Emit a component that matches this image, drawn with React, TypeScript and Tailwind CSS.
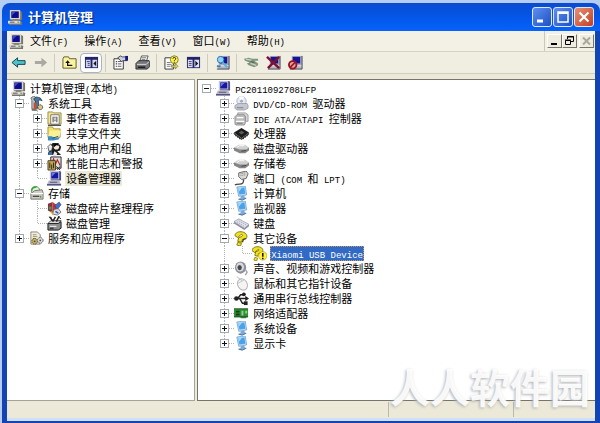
import { Fragment, ReactNode } from "react";
import clsx from "clsx";

type Node = {
    label: string;
    icon: ReactNode;
    open?: boolean;
    closed?: boolean;
    current?: boolean;
    selected?: boolean;
    children?: Node[];
};

function Icon({ children }: { children: ReactNode }) {
    return (
        <svg viewBox="0 0 16 16" className="w-[15px] h-[15px] shrink-0" aria-hidden="true">
            {children}
        </svg>
    );
}

/* ---------- icons ---------- */

const computer = (
    <Icon>
        <path d="M3 1h10l2 1v9H3z" fill="#77746e" />
        <path d="M2 0h11v10H2z" fill="#d8d5cc" />
        <path d="M3.5 1.5h8v7h-8z" fill="#0c0c8c" />
        <path d="M4 2h4L4 6z" fill="#3a4cc8" />
        <path d="M5 10h6v2H5z" fill="#77746e" />
        <path d="M1 12h13l1 1v3H1z" fill="#77746e" />
        <path d="M0 11.5h13v3H0z" fill="#dedbd2" />
        <path d="M2 13h5" stroke="#555" />
        <path d="M10 13h2" stroke="#2a9a2a" />
    </Icon>
);

const device = (
    <Icon>
        <path d="M4 0h10l1 1v9H4z" fill="#4f4f88" />
        <path d="M3 0h10v9H3z" fill="#c4c4dc" />
        <path d="M4.5 1.5h7.5v6.5H4.5z" fill="#1717a0" />
        <path d="M5 2h4L5 6z" fill="#6b7be0" />
        <path d="M2 10h11l2 4H0z" fill="#b7b7c6" />
        <path d="M0 14h15v1.5H0z" fill="#3d3d70" />
        <path d="M3 12h8" stroke="#50507a" />
    </Icon>
);

const monitor = (
    <Icon>
        <path d="M3 1l9-1 1.5 9.5L5 11z" fill="#b9dcf5" stroke="#6d9fce" strokeWidth=".8" />
        <path d="M4.5 2.3l6.6-.8 1 6.7-6.4.9z" fill="#4aa3ea" />
        <path d="M4.6 2.4l4-.5-3.3 4z" fill="#a6daff" />
        <path d="M7 11l4-1 .5 2 2 1-5 2.5L4 14l3-1.2z" fill="#7fa9d4" />
        <path d="M5 14l4 1 4-2" stroke="#4c73a6" fill="none" />
    </Icon>
);

const tools = (
    <Icon>
        <path d="M2 2l3-2 3 2-1 2v10H3V5z" fill="#b7bdc4" stroke="#444" strokeWidth=".7" />
        <path d="M5 3l3-2 4 1 2 3-3-1-1 2 1 7H7V6z" fill="#3f79a8" stroke="#222" strokeWidth=".7" />
        <path d="M5 7h3v7H5z" fill="#c7502a" />
        <circle cx="12" cy="12" r="2.6" fill="#d7c68a" stroke="#333" strokeDasharray="1.5 .8" />
        <path d="M3 15h6" stroke="#222" />
    </Icon>
);

const eventLog = (
    <Icon>
        <path d="M1 3V1h5l1 1h8v12H1z" fill="#f5e58c" stroke="#7b7434" strokeWidth=".8" />
        <path d="M4 4h9v10H4z" fill="#fff" stroke="#555" strokeWidth=".8" />
        <path d="M6.5 6v6M10.5 6v6" stroke="#333" />
        <path d="M8.5 6v5" stroke="#333" strokeDasharray="2 1" />
        <path d="M1 15.3h14" stroke="#222" />
    </Icon>
);

const sharedFolder = (
    <Icon>
        <path d="M1 3V1h5l1 2h7v9H1z" fill="#f6e36c" stroke="#8b8230" strokeWidth=".8" />
        <path d="M3 5h12l-2 7H1z" fill="#fbf09a" />
        <path d="M1 11h4l4 2 4-1v2l-6 1.5H1z" fill="#3f8cc0" />
        <path d="M6 13l6-2" stroke="#23506d" />
    </Icon>
);

const users = (
    <Icon>
        <path d="M1 15c0-4 2-5 4-5l-2-4 3-4h6l3 4-1 4-3 1 4 4z" fill="#1b1b1b" />
        <circle cx="10" cy="6" r="3" fill="#f3e7da" />
        <path d="M7 4c2-2 5-2 6 1l-3-.5L7 7z" fill="#000" />
        <path d="M1 6l3-3 2 3-1 4-3 1z" fill="#e9e9e9" stroke="#222" strokeWidth=".7" />
        <path d="M8 11l3 2-1 3H6z" fill="#e8e8e8" />
        <path d="M2 12l3-1 1 4H1z" fill="#386fb0" />
    </Icon>
);

const perfLog = (
    <Icon>
        <path d="M4 1h11v12H4z" fill="#ddd" stroke="#222" />
        <path d="M5 8l2-5 2 6 2-5 3 6" fill="none" stroke="#b32222" strokeWidth="1.2" />
        <path d="M1 5h8v10H1z" fill="#caa64a" stroke="#222" strokeWidth=".8" />
        <path d="M3 7v6M5 9v5M7 7v6" stroke="#222" />
        <path d="M10 11l4 4M14 11l-3 4" stroke="#222" />
    </Icon>
);

const storage = (
    <Icon>
        <circle cx="7" cy="5" r="4.5" fill="#dff0de" stroke="#57a057" />
        <path d="M3 5c0-3 3-4 5-4" stroke="#3aa23a" strokeWidth="1.5" fill="none" />
        <path d="M6 5l8-1 1 3v7H2V8z" fill="#d0cec6" stroke="#5c5a55" strokeWidth=".8" />
        <path d="M2 8h13" stroke="#fff" />
        <path d="M4 11h7" stroke="#444" strokeWidth="1.4" />
        <path d="M12.500 10.500v2" stroke="#2f9b2f" strokeWidth="1.2" />
    </Icon>
);

const defrag = (
    <Icon>
        <path d="M1 3l5-2v12l-5-3z" fill="#8c3040" />
        <path d="M6 1l4 3v10l-4-1z" fill="#c33" />
        <path d="M2 6h3v3H2z" fill="#35a050" />
        <path d="M8 5l5-4 2 3-4 5z" fill="#3b72cc" stroke="#223" strokeWidth=".5" />
        <path d="M7 9l5-1 3 4-4 3-5-1z" fill="#d9d9e4" stroke="#444" strokeWidth=".7" />
        <path d="M9 11l3 2" stroke="#2f55b8" strokeWidth="1.5" />
        <path d="M4 11l3 4" stroke="#e0b033" strokeWidth="1.5" />
    </Icon>
);

const diskManage = (
    <Icon>
        <path d="M1 8h11l3-2v7l-3 2H1z" fill="#8f8f8f" stroke="#111" />
        <path d="M1 8l3-3h11l-3 3z" fill="#ddd" stroke="#111" strokeWidth=".8" />
        <path d="M3 1l3 4M9 1L6 6M13 0l-3 6" stroke="#222" strokeWidth="1.6" />
        <path d="M2 1l3 1M12 1l3 2" stroke="#222" />
        <path d="M3 11h7" stroke="#fff" />
        <path d="M3 13h4" stroke="#111" />
    </Icon>
);

const services = (
    <Icon>
        <path d="M2 1h7l3 3v10H2z" fill="#f3eed9" stroke="#6a675c" strokeWidth=".8" />
        <path d="M4 4h4M4 6h5M4 8h3" stroke="#998f6c" />
        <circle cx="6" cy="11" r="3" fill="#c9b469" stroke="#4d4726" strokeDasharray="1.600 .8" />
        <circle cx="12" cy="10" r="3" fill="#dedede" stroke="#555" strokeDasharray="1.600 .8" />
        <circle cx="12" cy="10" r="1" fill="#555" />
        <circle cx="6" cy="11" r="1" fill="#4d4726" />
    </Icon>
);

const disc = (
    <Icon>
        <circle cx="8" cy="5.500" r="5" fill="#e6eaf2" stroke="#a3a9b8" strokeWidth=".8" />
        <path d="M8 5.500L5 1.500a5 5 0 016 0z" fill="#fff" />
        <circle cx="8" cy="5.500" r="1.500" fill="#9aa6c4" />
        <path d="M1 10l4-2h9l1 2v3l-4 2H3l-2-2z" fill="#c6c8cf" stroke="#888c98" strokeWidth=".7" />
        <path d="M3 12.500h7" stroke="#777c89" />
    </Icon>
);

const ide = (
    <Icon>
        <path d="M4 2h8l3 2v7h-3V6H4z" fill="#d6d6d6" stroke="#8a8a8a" strokeWidth=".8" />
        <path d="M1 6l2-2h8l1 2v7l-1 2H2l-1-1z" fill="#bdbdbd" stroke="#808080" strokeWidth=".8" />
        <path d="M3 7h7M2 11h9" stroke="#fff" strokeWidth="1.300" />
        <path d="M3 13h6" stroke="#777" />
    </Icon>
);

const cpu = (
    <Icon>
        <path d="M0 7l8-5 8 5-8 6z" fill="#1c1c1c" />
        <path d="M0 7v2l8 6 8-6V7l-8 6z" fill="#454545" />
        <path d="M2 9v2M4 10.500v2M6 12v2M10 12v2M12 10.500v2M14 9v2" stroke="#222" />
        <path d="M5 7l3-2 3 2-3 2z" fill="#5b5b5b" />
    </Icon>
);

const drive = (
    <Icon>
        <path d="M0 7l5-3h7l4 3-4 4H6z" fill="#d0d0d0" />
        <path d="M0 7l6 2h7l3-2v3l-4 3H6L0 10z" fill="#858585" />
        <path d="M8 11l5-1" stroke="#444" />
        <path d="M3 7l3-2h5" stroke="#fff" fill="none" />
    </Icon>
);

const port = (
    <Icon>
        <path d="M5 2l8-2 2 3-2 5-5 1-3-3z" fill="#d8d8d4" stroke="#555" strokeWidth=".9" />
        <path d="M7 3l5-1M7 5l5-1" stroke="#777" strokeDasharray="1 1" />
        <path d="M10 9c1 3-1 5-4 5s-4 0-5 1" fill="none" stroke="#444" strokeWidth="1.500" />
    </Icon>
);

const keyboard = (
    <Icon>
        <path d="M0 6l5-3 11 6-5 4z" fill="#dfe1ea" stroke="#9a9cab" strokeWidth=".8" />
        <path d="M0 6l11 7 5-4v2l-5 4L0 8z" fill="#8e90a2" />
        <path d="M3 6l8 5M5 5l8 4.500" stroke="#a8aaba" strokeDasharray="1.500 1" />
    </Icon>
);

const unknown = (
    <Icon>
        <path d="M1 5c0-3 4-5 8-4s6 4 4 7l-4 1-1 3-4-1 1-4 3-1c2-1 1-3-1-2L4 7z" fill="#f2e21c" stroke="#6e660a" strokeWidth=".9" />
        <path d="M4 12l4 1-1 3-4-1z" fill="#f2e21c" stroke="#6e660a" strokeWidth=".8" />
        <path d="M13 8l-3 1-1 3" fill="none" stroke="#3e3a08" strokeWidth="1.300" />
    </Icon>
);

const unknownAlert = (
    <Icon>
        <path d="M0 5c0-3 4-5 8-4s4 4 3 6l-4 1-1 3-3-1 1-4 3-1c1-1 0-2-1-1L3 7z" fill="#f2e21c" stroke="#6e660a" strokeWidth=".9" />
        <path d="M3 12l3 1-1 3-3-1z" fill="#f2e21c" stroke="#6e660a" strokeWidth=".7" />
        <circle cx="11.500" cy="10.500" r="4.500" fill="#fff23a" stroke="#a89b13" strokeWidth=".7" />
        <path d="M11.500 7.500v4M11.500 12.500v1.500" stroke="#000" strokeWidth="1.500" />
    </Icon>
);

const sound = (
    <Icon>
        <ellipse cx="7" cy="7" rx="6" ry="6.500" fill="#8d9097" />
        <ellipse cx="6.500" cy="6.500" rx="4.200" ry="4.800" fill="#d7d9de" />
        <ellipse cx="6" cy="7" rx="2.300" ry="2.800" fill="#43464d" />
        <path d="M12 9l2 3-2 3" fill="none" stroke="#a4a7b0" strokeWidth="1.500" />
    </Icon>
);

const mouse = (
    <Icon>
        <path d="M3 1c2 0 2 2 4 3" fill="none" stroke="#b5b5b5" />
        <ellipse cx="9" cy="9" rx="5" ry="6.300" transform="rotate(-30 9 9)" fill="#f4f4f4" stroke="#b0b0b0" />
        <path d="M4 8l7-4M7 3l1.500 3" stroke="#c4c4c4" fill="none" />
    </Icon>
);

const usb = (
    <Icon>
        <path d="M2 8h11" stroke="#222" strokeWidth="1.600" />
        <path d="M12 5l4 3-4 3z" fill="#222" />
        <circle cx="2.500" cy="8" r="2.400" fill="#222" />
        <path d="M4 8l3-4h3M6 8l3 5h3" fill="none" stroke="#222" strokeWidth="1.500" />
        <circle cx="10.500" cy="3.500" r="2" fill="#222" />
        <path d="M10.500 11h4v4h-4z" fill="#222" />
    </Icon>
);

const network = (
    <Icon>
        <path d="M0 3h15v9H0z" fill="#2f8f35" />
        <path d="M0 3h15M0 11.500h15" stroke="#17571c" />
        <path d="M2 5h4v2H2zM2 8h4v2H2z" fill="#153f19" />
        <path d="M8 5h2v5H8zM12 5h2v3h-2z" fill="#92d28a" />
        <path d="M7 12h6v1H7z" fill="#17571c" />
    </Icon>
);

const leftTree: Node = {
    label: "计算机管理(本地)",
    icon: computer,
    children: [
        {
            label: "系统工具",
            icon: tools,
            open: true,
            children: [
                { label: "事件查看器", icon: eventLog, closed: true },
                { label: "共享文件夹", icon: sharedFolder, closed: true },
                { label: "本地用户和组", icon: users, closed: true },
                { label: "性能日志和警报", icon: perfLog, closed: true },
                { label: "设备管理器", icon: device, current: true },
            ],
        },
        {
            label: "存储",
            icon: storage,
            open: true,
            children: [
                { label: "磁盘碎片整理程序", icon: defrag },
                { label: "磁盘管理", icon: diskManage },
            ],
        },
        { label: "服务和应用程序", icon: services, closed: true },
    ],
};

const rightTree: Node = {
    label: "PC2011092708LFP",
    icon: device,
    open: true,
    children: [
        { label: "DVD/CD-ROM 驱动器", icon: disc, closed: true },
        { label: "IDE ATA/ATAPI 控制器", icon: ide, closed: true },
        { label: "处理器", icon: cpu, closed: true },
        { label: "磁盘驱动器", icon: drive, closed: true },
        { label: "存储卷", icon: drive, closed: true },
        { label: "端口 (COM 和 LPT)", icon: port, closed: true },
        { label: "计算机", icon: monitor, closed: true },
        { label: "监视器", icon: monitor, closed: true },
        { label: "键盘", icon: keyboard, closed: true },
        {
            label: "其它设备",
            icon: unknown,
            open: true,
            children: [{ label: "Xiaomi USB Device", icon: unknownAlert, selected: true }],
        },
        { label: "声音、视频和游戏控制器", icon: sound, closed: true },
        { label: "鼠标和其它指针设备", icon: mouse, closed: true },
        { label: "通用串行总线控制器", icon: usb, closed: true },
        { label: "网络适配器", icon: network, closed: true },
        { label: "系统设备", icon: monitor, closed: true },
        { label: "显示卡", icon: monitor, closed: true },
    ],
};

/* ---------- tree ---------- */

// Latin runs use a narrow fixed-width face, half as wide as a Chinese glyph
function Label({ text }: { text: string }) {
    return (
        <>
            {text.split(/([\x20-\x7e]+)/).map((part, i) =>
                i % 2 ? (
                    <span key={i} className="font-['Liberation_Mono'] text-[9px]">
                        {part}
                    </span>
                ) : (
                    <Fragment key={i}>{part}</Fragment>
                )
            )}
        </>
    );
}

function Guide({ d }: { d: string }) {
    return (
        <svg viewBox="0 0 18 15" className="w-[18px] h-[15px]" aria-hidden="true">
            <path d={d} stroke="#b4b4b4" strokeDasharray="1 1" fill="none" />
        </svg>
    );
}

function Branch({ node, trail, root, last }: { node: Node; trail: boolean[]; root?: boolean; last?: boolean }) {
    const expandable = node.open || node.closed;
    let path = "M9 7.500H18";
    if (!root) path += last ? "M8.500 0V8" : "M8.500 0V15";

    return (
        <li role="treeitem" aria-expanded={expandable ? !!node.open : undefined} aria-selected={!!node.selected}>
            <div className="flex items-center h-[15px]">
                {trail.map((more, i) => (
                    <span key={i} className="w-[18px] h-[15px] shrink-0">
                        {more && <Guide d="M8.500 0V15" />}
                    </span>
                ))}
                {(!root || expandable) && (
                    <span className="relative w-[18px] h-[15px] shrink-0">
                        <Guide d={path} />
                        {expandable && (
                            <button
                                aria-label={node.label}
                                className="absolute left-1 top-[3px] w-[9px] h-[9px] bg-white border border-[#a3a9b2]"
                            >
                                <svg viewBox="0 0 7 7" className="w-[7px] h-[7px]">
                                    <path d={node.open ? "M1 3.500H6" : "M1 3.500H6M3.500 1V6"} stroke="#111" />
                                </svg>
                            </button>
                        )}
                    </span>
                )}
                {node.icon}
                <span
                    className={clsx(
                        "ml-[3px] px-px h-[15px] leading-[15px] whitespace-nowrap",
                        node.current && "bg-[#ece9d8]",
                        node.selected && "bg-[#316ac5] text-white outline-dotted outline-1 -outline-offset-1 outline-[#c9955a]"
                    )}
                >
                    <Label text={node.label} />
                </span>
            </div>
            {node.children && (
                <ul role="group">
                    {node.children.map((child, i) => (
                        <Branch
                            key={child.label}
                            node={child}
                            trail={root ? (expandable ? [false] : []) : [...trail, !last]}
                            last={i === node.children!.length - 1}
                        />
                    ))}
                </ul>
            )}
        </li>
    );
}

/* ---------- bars ---------- */

const menus = ["文件(F)", "操作(A)", "查看(V)", "窗口(W)", "帮助(H)"];

function ToolButton({ name, pressed, children }: { name: string; pressed?: boolean; children: ReactNode }) {
    return (
        <button
            aria-label={name}
            className={clsx(
                "w-[22px] h-5 shrink-0 flex items-center justify-center",
                pressed && "bg-white border border-[#a9b3c4] rounded-sm"
            )}
        >
            {children}
        </button>
    );
}

function Separator() {
    return <span className="w-px h-[18px] mx-[3px] bg-[#cfccbd] shrink-0" />;
}

const paneIcon = (flip: boolean) => (
    <Icon>
        <path d="M1 2h14v12H1z" fill="#23236e" />
        <path d="M2 5h5v8H2zM9 5h5v8H9z" fill={flip ? "#dfe3ee" : "#cfd6ea"} />
        <path d={flip ? "M3 7h3M3 9h3M3 11h3" : "M3 7h3M4 9h2M4 11h2"} stroke="#3b3b7c" />
        <path d={flip ? "M10 6l3 3-3 3z" : "M13 6l-3 3 3 3z"} fill="#111" />
    </Icon>
);

const toolMonitor = (
    <>
        <path d="M4 1h11v10H4z" fill="#a9a9bd" />
        <path d="M5 2h8v7H5z" fill="#14149a" />
        <path d="M3 12h12v3H3z" fill="#b5b5c4" />
        <path d="M15 1v14H2" fill="none" stroke="#44445a" />
    </>
);

function Toolbar() {
    return (
        <div className="flex items-center h-[22px] border-b border-[#d1cdbb] bg-[#f0eee1]">
            <ToolButton name="后退">
                <Icon>
                    <path d="M1 8l6-5v3h8v4H7v3z" fill="#48c5c8" stroke="#173c50" />
                </Icon>
            </ToolButton>
            <ToolButton name="前进">
                <Icon>
                    <path d="M15 8L9 3v3.500H2v3h7V13z" fill="#a9a8a2" />
                </Icon>
            </ToolButton>
            <Separator />
            <ToolButton name="向上">
                <Icon>
                    <path d="M1 4l1-2h5l1 2h7v10H1z" fill="#fbf3a2" stroke="#5e5a20" />
                    <path d="M11 11H6V7" fill="none" stroke="#111" strokeWidth="1.300" />
                    <path d="M3.500 8.500L6 5.500l2.500 3z" fill="#111" />
                </Icon>
            </ToolButton>
            <ToolButton name="显示/隐藏控制台树" pressed>
                {paneIcon(false)}
            </ToolButton>
            <Separator />
            <ToolButton name="属性">
                <Icon>
                    <path d="M1 4h10v11H1z" fill="#fff" stroke="#333" />
                    <path d="M3 7h1M3 9.500h1M3 12h1" stroke="#111" strokeWidth="1.300" />
                    <path d="M5 7h4M5 9.500h4M5 12h4" stroke="#555" />
                    <path d="M5 3l3-2 2 1h5v4h-4L9 7z" fill="#c9cbe2" stroke="#222" strokeWidth=".8" />
                    <path d="M13 1h3v5h-3z" fill="#151584" />
                </Icon>
            </ToolButton>
            <ToolButton name="打印">
                <Icon>
                    <path d="M5 7l2-6h7l-2 6z" fill="#fff" stroke="#333" strokeWidth=".8" />
                    <path d="M7 3h5M7 5h4" stroke="#666" />
                    <path d="M1 9l3-3h11l1 2v4l-3 3H1z" fill="#77777a" stroke="#1c1c1c" strokeWidth=".9" />
                    <path d="M2 10h10l3-3" stroke="#ddd" fill="none" />
                    <path d="M3 13h8" stroke="#151515" strokeWidth="1.500" />
                </Icon>
            </ToolButton>
            <Separator />
            <ToolButton name="帮助">
                <Icon>
                    <path d="M1 3h9v12H1z" fill="#fff" stroke="#333" />
                    <path d="M3 8h4M3 10h5M3 12h4" stroke="#777" />
                    <circle cx="11" cy="5" r="4.200" fill="#fbf04c" stroke="#6d6717" strokeWidth=".8" />
                    <path d="M9.500 4c0-2 3-2 3 0 0 1-1.500 1-1.500 2.500M11 7.300v1" fill="none" stroke="#222" />
                    <path d="M8 11h4v-2l3 3-3 3v-2H8z" fill="#e8d43a" stroke="#555" strokeWidth=".6" />
                </Icon>
            </ToolButton>
            <ToolButton name="显示/隐藏操作窗格">{paneIcon(true)}</ToolButton>
            <Separator />
            <ToolButton name="扫描检测硬件改动">
                <Icon>
                    {toolMonitor}
                    <circle cx="6" cy="5" r="3.500" fill="#8fd4f5" stroke="#2c72a5" />
                    <path d="M8 8l5 5" stroke="#58b4e2" strokeWidth="2.200" />
                    <path d="M2 12h4" stroke="#3580b0" strokeWidth="2" />
                </Icon>
            </ToolButton>
            <Separator />
            <ToolButton name="更新驱动程序">
                <Icon>
                    <path d="M0 4l5-1 4 1h6v2h-4l4 3v2l-4 2-6-2-2-2 3-1-5-2z" fill="#80957f" />
                    <path d="M2 4.500l6 1M7 9l6 2" stroke="#c5d3c1" strokeWidth="1.300" />
                    <path d="M7 7l4 1" stroke="#465a48" />
                </Icon>
            </ToolButton>
            <ToolButton name="卸载">
                <Icon>
                    {toolMonitor}
                    <path d="M1 2l13 12M14 2L2 14" stroke="#7d1230" strokeWidth="2.600" />
                </Icon>
            </ToolButton>
            <ToolButton name="停用">
                <Icon>
                    {toolMonitor}
                    <circle cx="5" cy="10.500" r="4" fill="#d9a8a8" stroke="#9c1423" strokeWidth="2" />
                    <path d="M2.500 13l5-5" stroke="#9c1423" strokeWidth="1.800" />
                </Icon>
            </ToolButton>
        </div>
    );
}

function CaptionButton({ name, danger, children }: { name: string; danger?: boolean; children: ReactNode }) {
    return (
        <button
            aria-label={name}
            className={clsx(
                "w-5 h-5 rounded-[3px] border border-[#dfe8fb] bg-linear-to-br",
                danger ? "from-[#e58f74] to-[#c43c1c]" : "from-[#5f8ff0] to-[#1c4fc4]"
            )}
        >
            <svg viewBox="0 0 18 18" className="w-[18px] h-[18px]" stroke="#fff" fill="none">
                {children}
            </svg>
        </button>
    );
}

function ChildButton({ name, children }: { name: string; children: ReactNode }) {
    return (
        <button
            aria-label={name}
            className="w-[15px] h-[14px] bg-[#efede0] border border-t-white border-l-white border-r-[#77756b] border-b-[#77756b]"
        >
            <svg viewBox="0 0 13 12" className="w-[13px] h-3" fill="none" stroke="#000">
                {children}
            </svg>
        </button>
    );
}

export default function App() {
    return (
        <div className="relative h-screen flex flex-col pt-[3px] pl-[2px] overflow-hidden bg-[#b5cdf3] text-black text-[11px] font-['Noto_Sans_CJK_SC',sans-serif]">
            <header className="h-7 shrink-0 flex items-center gap-1 pl-[6px] pr-[6px] rounded-t-lg bg-linear-to-b from-[#0a4bd0] via-[#0456e8] to-[#0663fb]">
                {computer}
                <h1 className="flex-1 pl-px text-[13px] leading-5 font-bold text-white [text-shadow:1px_1px_1px_#0a2c80]">
                    计算机管理
                </h1>
                <div className="flex gap-px">
                    <CaptionButton name="最小化">
                        <path d="M4 13h6" strokeWidth="3" />
                    </CaptionButton>
                    <CaptionButton name="最大化">
                        <path d="M4 4h10v10H4z" strokeWidth="1.500" />
                        <path d="M4 5h10" strokeWidth="2" />
                    </CaptionButton>
                    <CaptionButton name="关闭" danger>
                        <path d="M4.500 4.500l9 9M13.500 4.500l-9 9" strokeWidth="2.200" />
                    </CaptionButton>
                </div>
            </header>

            <div className="flex-1 min-h-0 flex flex-col border-x-[5px] border-b-2 border-[#1244b4] bg-[#cfe0f8] pb-[3px]">
                <nav className="h-[21px] shrink-0 flex items-center pl-[2px] bg-[#f3f1e6] border-b border-[#d6d3c4]">
                    {computer}
                    <div className="flex-1 flex gap-4 pl-[6px]">
                        {menus.map((menu) => (
                            <button key={menu} className="whitespace-nowrap leading-5">
                                <Label text={menu} />
                            </button>
                        ))}
                    </div>
                    <div className="flex items-center h-full pl-[2px] pr-px border-l border-[#cbc8ba]">
                        <ChildButton name="最小化窗口">
                            <path d="M3 9h6" strokeWidth="2" />
                        </ChildButton>
                        <ChildButton name="还原窗口">
                            <path d="M4.500 4V1.500h6v5H8M4 2h7" />
                            <path d="M2.500 5.500h5v4h-5zM2 5h6" />
                        </ChildButton>
                        <span className="w-[2px]" />
                        <ChildButton name="关闭窗口">
                            <path d="M3 2.500l7 7M10 2.500l-7 7" stroke="#aaa89c" strokeWidth="2" />
                        </ChildButton>
                    </div>
                </nav>

                <Toolbar />

                <main className="flex-1 min-h-0 flex pt-[5px] bg-[#ece9d8]">
                    <div className="w-[32%] shrink-0 bg-white border-t border-r border-b border-[#a5a398] pt-px pl-1">
                        <ul role="tree" aria-label="控制台树">
                            <Branch node={leftTree} trail={[]} root />
                        </ul>
                    </div>
                    <div className="flex-1 min-w-0 ml-[2px] bg-white border-t border-l border-b border-[#77756b] pt-px">
                        <ul role="tree" aria-label="设备">
                            <Branch node={rightTree} trail={[]} root />
                        </ul>
                    </div>
                </main>

                <footer className="h-[17px] shrink-0 flex justify-end bg-[#ece9d8]">
                    <span className="w-[125px] my-px border-l border-[#bcb9a8]" />
                    <span className="w-[82px] my-px border-l border-[#bcb9a8]" />
                </footer>
            </div>

            <div className="absolute right-[10px] bottom-[17px] text-[40px] leading-10 font-bold text-white/90 [text-shadow:-1px_1px_3px_#b0b0b0] pointer-events-none">
                人人软件园
            </div>
        </div>
    );
}
